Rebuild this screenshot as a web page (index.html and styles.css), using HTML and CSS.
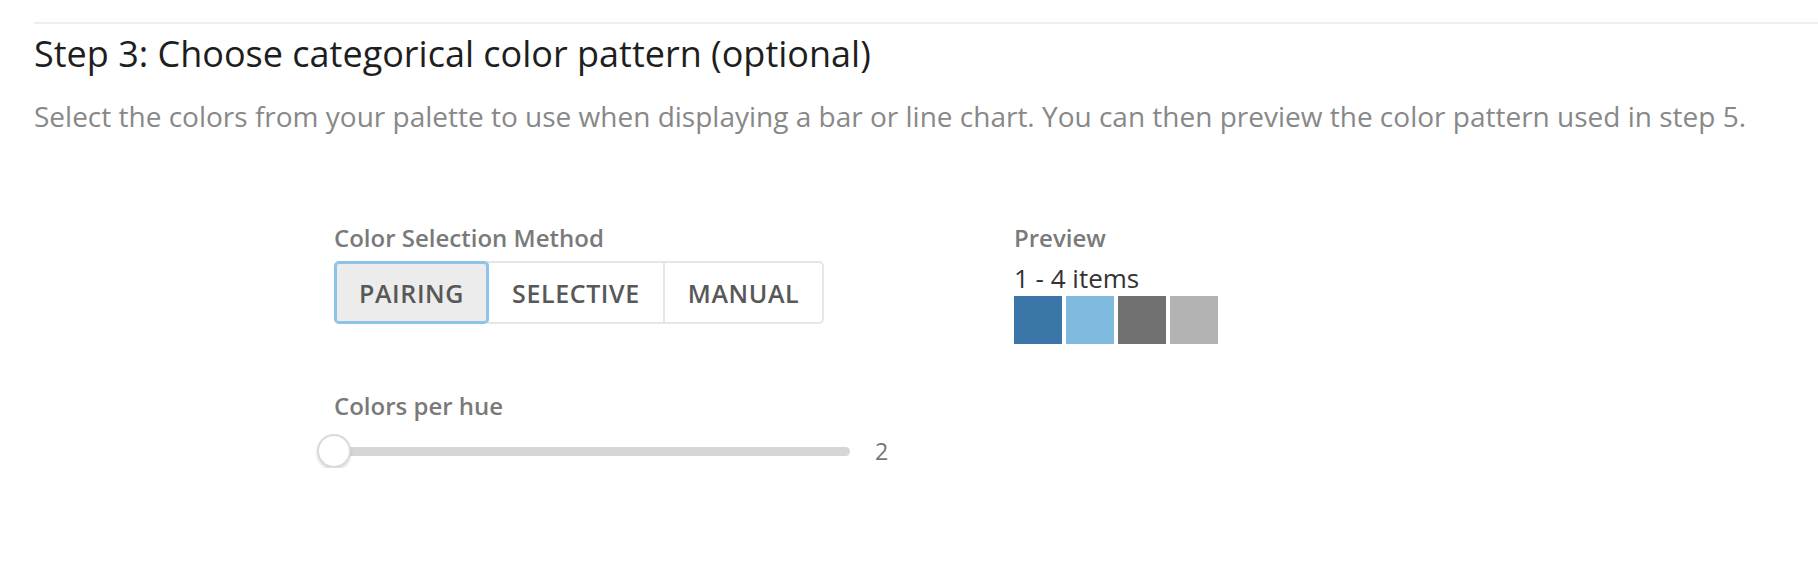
FILE: index.html
```html
<!DOCTYPE html>
<html lang="en">
<head>
<meta charset="utf-8">
<title>Step 3</title>
<link rel="stylesheet" href="styles.css">
</head>
<body>
<section class="step">
  <hr class="divider">
  <h3 class="step-title">Step 3: Choose categorical color pattern (optional)</h3>
  <p class="step-desc">Select the colors from your palette to use when displaying a bar or line chart. You can then preview the color pattern used in step 5.</p>
  <div class="form-row">
    <div class="col-left">
      <div class="field">
        <label class="field-label">Color Selection Method</label>
        <div class="btn-group">
          <button class="btn active">PAIRING</button>
          <button class="btn">SELECTIVE</button>
          <button class="btn">MANUAL</button>
        </div>
      </div>
      <div class="field field-slider">
        <label class="field-label">Colors per hue</label>
        <div class="slider-row">
          <div class="slider-track">
            <span class="slider-thumb"></span>
          </div>
          <span class="slider-value">2</span>
        </div>
      </div>
    </div>
    <div class="col-right">
      <label class="field-label">Preview</label>
      <div class="preview-count">1 - 4 items</div>
      <div class="swatches">
        <span class="swatch" style="background:#3b76a9"></span>
        <span class="swatch" style="background:#81badf"></span>
        <span class="swatch" style="background:#717171"></span>
        <span class="swatch" style="background:#b3b3b3"></span>
      </div>
    </div>
  </div>
</section>
</body>
</html>
```

FILE: styles.css
```css
* { box-sizing: border-box; }
html, body {
  margin: 0;
  padding: 0;
  background: #ffffff;
  font-family: "Open Sans", "Noto Sans", sans-serif;
}
.step {
  padding: 22px 0 0 34px;
}
.divider {
  margin: 0;
  border: 0;
  height: 2px;
  background: #eeeeee;
}
.step-title {
  margin: 9px 0 0 0;
  font-size: 36px;
  line-height: 42px;
  font-weight: 400;
  color: #1e1e1e;
}
.step-desc {
  margin: 23px 0 0 0;
  font-size: 28px;
  line-height: 36px;
  color: #888888;
}
.form-row {
  display: flex;
  padding-left: 300px;
  margin-top: 88px;
}
.col-left {
  width: 680px;
}
.field-label {
  display: block;
  font-size: 24px;
  line-height: 32px;
  font-weight: 600;
  color: #7a7a7a;
  margin-bottom: 7px;
}
.btn-group {
  display: flex;
}
.btn {
  font-family: "Open Sans", "Noto Sans", sans-serif;
  font-size: 25px;
  font-weight: 600;
  letter-spacing: 0.6px;
  color: #585858;
  background: #ffffff;
  border: 2px solid #e6e6e6;
  height: 63px;
  padding: 0 23px;
  margin: 0;
  position: relative;
}
.btn + .btn {
  margin-left: -2px;
}
.btn:first-child {
  border-radius: 5px 0 0 5px;
}
.btn:last-child {
  border-radius: 0 5px 5px 0;
}
.btn.active {
  background: #ececec;
  border-color: #8cc3e8;
  box-shadow: inset 0 0 0 1px #8cc3e8;
  border-radius: 5px;
  z-index: 1;
}
.field-slider {
  margin-top: 66px;
}
.slider-row {
  display: flex;
  align-items: center;
  height: 34px;
  margin-top: 12px;
}
.slider-track {
  position: relative;
  width: 516px;
  height: 9px;
  border-radius: 5px;
  background: #d6d6d6;
}
.slider-thumb {
  position: absolute;
  left: -17px;
  top: -12.5px;
  width: 34px;
  height: 34px;
  border-radius: 50%;
  background: #ffffff;
  border: 2px solid #dadada;
  box-shadow: 0 2px 3px rgba(0, 0, 0, 0.15);
}
.slider-value {
  margin-left: 25px;
  font-size: 23.3px;
  color: #777777;
}
.preview-count {
  font-size: 26px;
  line-height: 34px;
  color: #333333;
  margin-top: 0;
}
.swatches {
  display: flex;
  gap: 4px;
  margin-top: 1px;
}
.swatch {
  display: block;
  width: 48px;
  height: 48px;
}
```
